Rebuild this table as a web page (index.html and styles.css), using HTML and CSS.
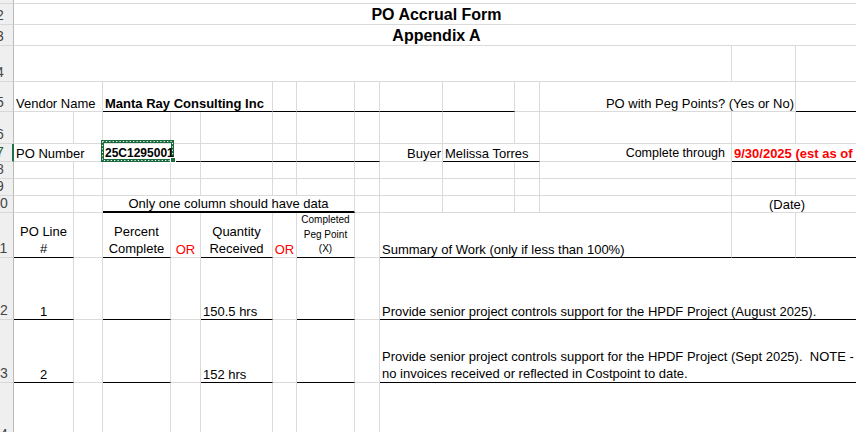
FILE: index.html
```html
<!DOCTYPE html>
<html>
<head>
<meta charset="utf-8">
<title>PO Accrual Form</title>
<link rel="stylesheet" href="styles.css">
</head>
<body>
<div class="sheet">
  <!-- row 1 -->
  <div class="rh"></div><div class="c span14"></div>
  <!-- row 2 -->
  <div class="rh">2</div><div class="c span14 center title">PO Accrual Form</div>
  <!-- row 3 -->
  <div class="rh">3</div><div class="c span14 center title">Appendix A</div>
  <!-- row 4 -->
  <div class="rh">4</div><div class="c span12"></div><div class="c"></div><div class="c"></div>
  <!-- row 5 -->
  <div class="rh">5</div>
  <div class="c span2">Vendor Name</div>
  <div class="c span3 ul bold">Manta Ray Consulting Inc</div>
  <div class="c ul"></div><div class="c ul"></div><div class="c ul"></div><div class="c ul"></div><div class="c ul"></div>
  <div class="c"></div>
  <div class="c span2 right">PO with Peg Points? (Yes or No)</div>
  <div class="c ul"></div>
  <!-- row 6 -->
  <div class="rh">6</div>
  <div class="c"></div><div class="c"></div><div class="c"></div><div class="c"></div><div class="c"></div><div class="c"></div><div class="c"></div>
  <div class="c"></div><div class="c"></div><div class="c"></div><div class="c"></div><div class="c"></div><div class="c"></div><div class="c"></div>
  <!-- row 7 -->
  <div class="rh active">7</div>
  <div class="c span2">PO Number</div>
  <div class="c span2 ul sel">
    <svg class="sel-box" width="73" height="22" viewBox="0 0 73 22">
      <rect x="1.5" y="1.5" width="70" height="19" fill="none" stroke="#1a6a3d" stroke-width="3"/>
      <rect x="1.5" y="1.5" width="70" height="19" fill="none" stroke="#ffffff" stroke-width="1" stroke-dasharray="1.2 2.2"/>
    </svg>
    <span class="sel-handle"></span>
    <span class="po-num">25C1295001</span>
  </div>
  <div class="c ul"></div><div class="c ul"></div><div class="c ul"></div><div class="c ul"></div>
  <div class="c right">Buyer</div>
  <div class="c span2 ul">Melissa Torres</div>
  <div class="c right trail">Complete through</div>
  <div class="c span2 ul bold red">9/30/2025 (est as of 9/10/2025)</div>
  <!-- row 8 -->
  <div class="rh">8</div>
  <div class="c"></div><div class="c"></div><div class="c"></div><div class="c"></div><div class="c"></div><div class="c"></div><div class="c"></div>
  <div class="c"></div><div class="c"></div><div class="c"></div><div class="c"></div><div class="c"></div><div class="c"></div><div class="c"></div>
  <!-- row 9 -->
  <div class="rh">9</div>
  <div class="c"></div><div class="c"></div><div class="c"></div><div class="c"></div><div class="c"></div><div class="c"></div><div class="c"></div>
  <div class="c"></div><div class="c"></div><div class="c"></div><div class="c"></div><div class="c"></div><div class="c"></div><div class="c"></div>
  <!-- row 10 -->
  <div class="rh">10</div>
  <div class="c"></div><div class="c"></div>
  <div class="c span5 center ul2">Only one column should have data</div>
  <div class="c"></div><div class="c"></div><div class="c"></div><div class="c"></div><div class="c"></div>
  <div class="c span2 date-label">(Date)</div>
  <!-- row 11 -->
  <div class="rh">11</div>
  <div class="c center ul multi"><span>PO Line<br>#</span></div>
  <div class="c"></div>
  <div class="c center ul multi"><span>Percent<br>Complete</span></div>
  <div class="c center red">OR</div>
  <div class="c center ul multi"><span>Quantity<br>Received</span></div>
  <div class="c center red">OR</div>
  <div class="c center ul small"><span>Completed<br>Peg Point<br>(X)</span></div>
  <div class="c"></div>
  <div class="c span4 ul">Summary of Work (only if less than 100%)</div>
  <div class="c ul"></div><div class="c ul"></div>
  <!-- row 12 -->
  <div class="rh">12</div>
  <div class="c center ul">1</div>
  <div class="c"></div>
  <div class="c ul"></div>
  <div class="c"></div>
  <div class="c ul">150.5 hrs</div>
  <div class="c"></div>
  <div class="c ul"></div>
  <div class="c"></div>
  <div class="c span6 ul">Provide senior project controls support for the HPDF Project (August 2025).</div>
  <!-- row 13 -->
  <div class="rh">13</div>
  <div class="c center ul">2</div>
  <div class="c"></div>
  <div class="c ul"></div>
  <div class="c"></div>
  <div class="c ul">152 hrs</div>
  <div class="c"></div>
  <div class="c ul"></div>
  <div class="c"></div>
  <div class="c span6 ul multi"><span>Provide senior project controls support for the HPDF Project (Sept 2025).&nbsp; NOTE -<br>no invoices received or reflected in Costpoint to date.</span></div>
  <!-- row 14 -->
  <div class="rh">14</div>
  <div class="c"></div><div class="c"></div><div class="c"></div><div class="c"></div><div class="c"></div><div class="c"></div><div class="c"></div><div class="c"></div>
  <div class="c span6"></div>
</div>
</body>
</html>
```

FILE: styles.css
```css
html, body {
  margin: 0;
  padding: 0;
  background: #ffffff;
  overflow: hidden;
}

body {
  width: 856px;
  height: 432px;
  font-family: "Liberation Sans", Arial, sans-serif;
  font-size: 13px;
  color: #000000;
}

.sheet {
  display: grid;
  grid-template-columns: 27px 60px 29px 68px 30px 72px 24px 58px 25px 63px 72px 25px 192px 64px 64px;
  grid-template-rows: 4px 21px 21px 36px 30px 32px 18px 17px 17px 17px 45px 62px 63px 61px;
  margin-left: -13px;
  width: 873px;
}

.rh {
  box-sizing: border-box;
  background: #efefef;
  border-right: 1px solid #b9b9b9;
  border-bottom: 1px solid #d8d8d8;
  display: flex;
  align-items: flex-end;
  justify-content: center;
  font-size: 14px;
  line-height: 16px;
  padding-bottom: 1px;
  color: #444444;
  overflow: hidden;
}

.rh.active {
  border-right: 2px solid #217346;
  padding-left: 1px;
  color: #1e5e3a;
}

.c {
  box-sizing: border-box;
  min-width: 0;
  border-right: 1px solid #dadada;
  border-bottom: 1px solid #dadada;
  display: flex;
  align-items: flex-end;
  padding: 0 2px;
  line-height: 15px;
  white-space: nowrap;
}

.span2 { grid-column: span 2; }
.span3 { grid-column: span 3; }
.span4 { grid-column: span 4; }
.span5 { grid-column: span 5; }
.span6 { grid-column: span 6; }
.span12 { grid-column: span 12; }
.span14 { grid-column: span 14; }

.center { justify-content: center; text-align: center; }
.right { justify-content: flex-end; padding-right: 1px; }
.trail { padding-right: 6px; font-size: 12.5px; }

.ul { border-bottom-color: #000000; }
.ul2 { border-bottom: 2px solid #000000; }

.bold { font-weight: bold; }
.red { color: #ff0000; }

.title {
  font-size: 16px;
  font-weight: bold;
  line-height: 18px;
}

.multi { line-height: 16.5px; }
.multi span { display: block; }

.small {
  font-size: 10px;
  line-height: 14.7px;
}
.small span { display: block; }

.date-label { padding-left: 37px; }

.sel { position: relative; }

.sel-box {
  position: absolute;
  left: -2px;
  top: -4px;
  display: block;
  pointer-events: none;
}

.sel-handle {
  position: absolute;
  left: 67px;
  top: 13px;
  width: 6px;
  height: 6px;
  box-sizing: border-box;
  background: #1a6a3d;
  border: 1px solid #ffffff;
}

.po-num {
  position: relative;
  z-index: 1;
  font-size: 12px;
  font-weight: bold;
}
```
